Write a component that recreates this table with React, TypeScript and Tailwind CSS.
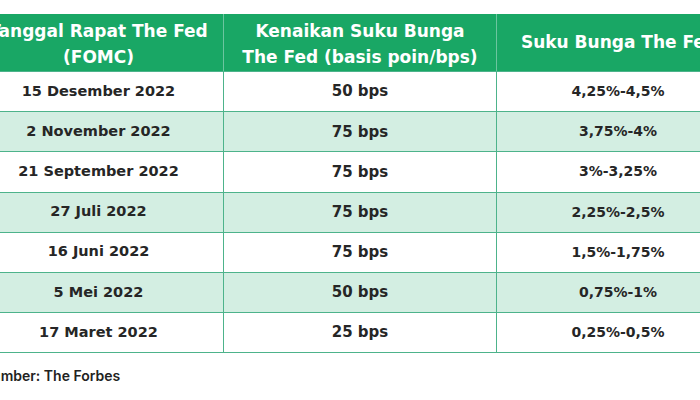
import React from "react";

const rows = [
  ["15 Desember 2022", "50 bps", "4,25%-4,5%"],
  ["2 November 2022", "75 bps", "3,75%-4%"],
  ["21 September 2022", "75 bps", "3%-3,25%"],
  ["27 Juli 2022", "75 bps", "2,25%-2,5%"],
  ["16 Juni 2022", "75 bps", "1,5%-1,75%"],
  ["5 Mei 2022", "50 bps", "0,75%-1%"],
  ["17 Maret 2022", "25 bps", "0,25%-0,5%"],
];

export default function App() {
  return (
    <div
      className="w-[700px] h-[400px] bg-white overflow-hidden text-[#262626]"
      style={{ fontFamily: "'DejaVu Sans', Inter, sans-serif" }}
    >
      <div className="pt-[14px] -ml-[26px] w-[765px]">
        <div className="grid grid-cols-[250px_273px_242px] bg-[#19a765] text-white text-[17px] font-bold leading-[26px] h-[58px] border-b border-[#4db38b]">
          <div className="flex items-center justify-center text-center border-r border-[#6cc59f] whitespace-nowrap pt-[3px]">
            <div>
              Tanggal Rapat The Fed
              <br />
              (FOMC)
            </div>
          </div>
          <div className="flex items-center justify-center text-center border-r border-[#6cc59f] whitespace-nowrap pt-[3px]">
            <div>
              Kenaikan Suku Bunga
              <br />
              The Fed (basis poin/bps)
            </div>
          </div>
          <div className="flex items-center justify-center text-center whitespace-nowrap pb-[2px] pl-[2px]">
            Suku Bunga The Fed
          </div>
        </div>
        {rows.map((r, i) => (
          <div
            key={i}
            className={`grid grid-cols-[250px_273px_242px] h-[40.2px] border-b-[1.5px] border-[#4db38b] ${
              i % 2 === 1 ? "bg-[#d3eee2]" : "bg-white"
            }`}
          >
            <div className="flex items-center justify-center border-r-[1.5px] border-[#4db38b] font-bold text-[14.5px]">
              {r[0]}
            </div>
            <div className="flex items-center justify-center border-r-[1.5px] border-[#4db38b] font-bold text-[15px]">
              {r[1]}
            </div>
            <div className="flex items-center justify-center font-bold text-[14px]">{r[2]}</div>
          </div>
        ))}
      </div>
      <div
        className="-ml-[17px] mt-[12px] text-[14px] font-semibold text-[#222]"
        style={{ fontFamily: "Inter, sans-serif" }}
      >
        Sumber: The Forbes
      </div>
    </div>
  );
}
